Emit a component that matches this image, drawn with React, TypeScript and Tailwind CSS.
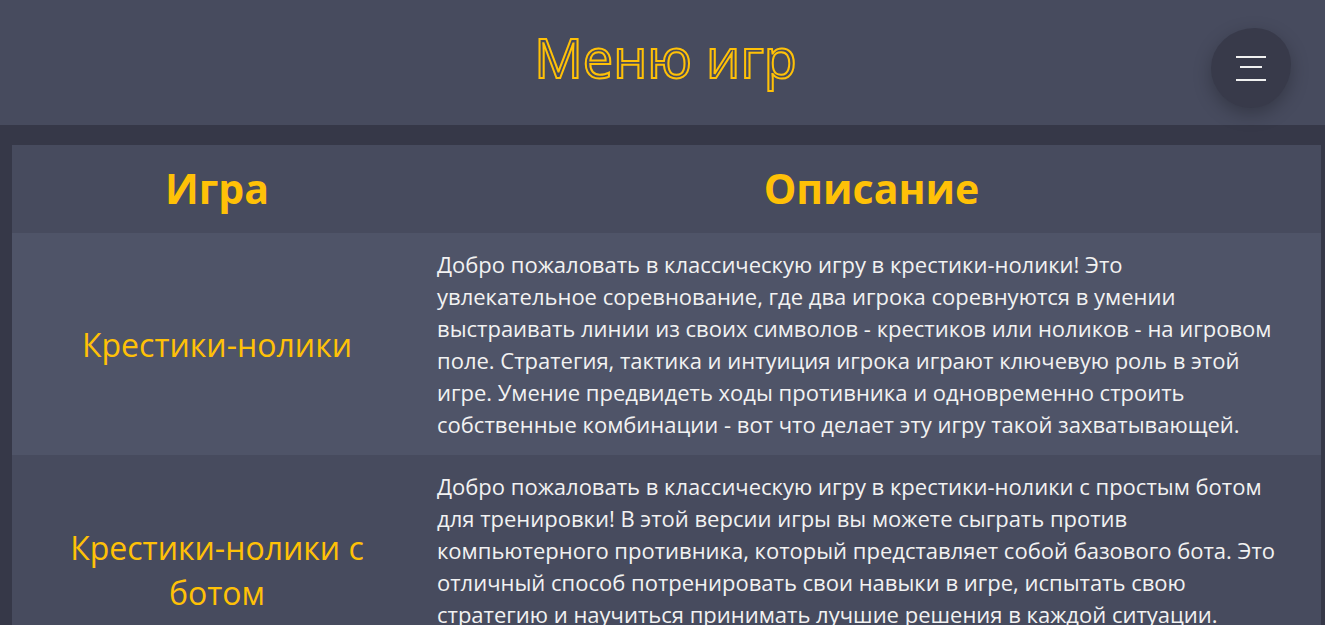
import React from 'react';

const games = [
  {
    name: ['Крестики-нолики'],
    lines: [
      'Добро пожаловать в классическую игру в крестики-нолики! Это',
      'увлекательное соревнование, где два игрока соревнуются в умении',
      'выстраивать линии из своих символов - крестиков или ноликов - на игровом',
      'поле. Стратегия, тактика и интуиция игрока играют ключевую роль в этой',
      'игре. Умение предвидеть ходы противника и одновременно строить',
      'собственные комбинации - вот что делает эту игру такой захватывающей.',
    ],
  },
  {
    name: ['Крестики-нолики с', 'ботом'],
    lines: [
      'Добро пожаловать в классическую игру в крестики-нолики с простым ботом',
      'для тренировки! В этой версии игры вы можете сыграть против',
      'компьютерного противника, который представляет собой базового бота. Это',
      'отличный способ потренировать свои навыки в игре, испытать свою',
      'стратегию и научиться принимать лучшие решения в каждой ситуации.',
    ],
  },
];

export default function App() {
  return (
    <div className="min-h-screen bg-[#363848] font-['Open_Sans',sans-serif] overflow-hidden">
      {/* Header */}
      <header className="relative h-[125px] bg-[#474b5e] flex items-center justify-center">
        <h1 className="text-[54px] leading-none text-transparent [-webkit-text-stroke:2px_#ffc107] -mt-[12px] ml-[6px]">
          Меню игр
        </h1>
        <button className="absolute left-[1211px] top-[28px] w-[80px] h-[80px] bg-[#383a4a] rounded-[55%_45%_50%_50%/50%_45%_55%_50%] shadow-[0_6px_18px_rgba(0,0,0,0.25)] flex flex-col items-center justify-center">
          <span className="block w-[30px] h-[2px] bg-[#f0f0f0]" />
          <span className="block w-[22px] h-[2px] bg-[#f0f0f0] mt-[8px]" />
          <span className="block w-[30px] h-[2px] bg-[#f0f0f0] mt-[11px]" />
        </button>
      </header>

      {/* Table */}
      <div className="ml-3 mt-5 w-[1309px]">
        <div className="flex h-[88px] bg-[#474b5e] text-[#ffc107] font-bold text-[41px]">
          <div className="w-[410px] flex items-center justify-center">Игра</div>
          <div className="flex-1 flex items-center justify-center">Описание</div>
        </div>
        {games.map((g, i) => (
          <div
            key={i}
            className={`flex ${i % 2 === 0 ? 'bg-[#4f5468]' : 'bg-[#474b5e] min-h-[230px]'}`}
          >
            <div className="w-[410px] flex flex-col items-center justify-center text-[#ffc107] text-[32px] leading-[45px] text-center">
              {g.name.map((n) => (
                <span key={n}>{n}</span>
              ))}
            </div>
            <div className="flex-1 px-[15px] py-[15px] text-[#f2f2f2] text-[22px] leading-[32px] whitespace-nowrap">
              {g.lines.map((l) => (
                <div key={l}>{l}</div>
              ))}
            </div>
          </div>
        ))}
      </div>
    </div>
  );
}
